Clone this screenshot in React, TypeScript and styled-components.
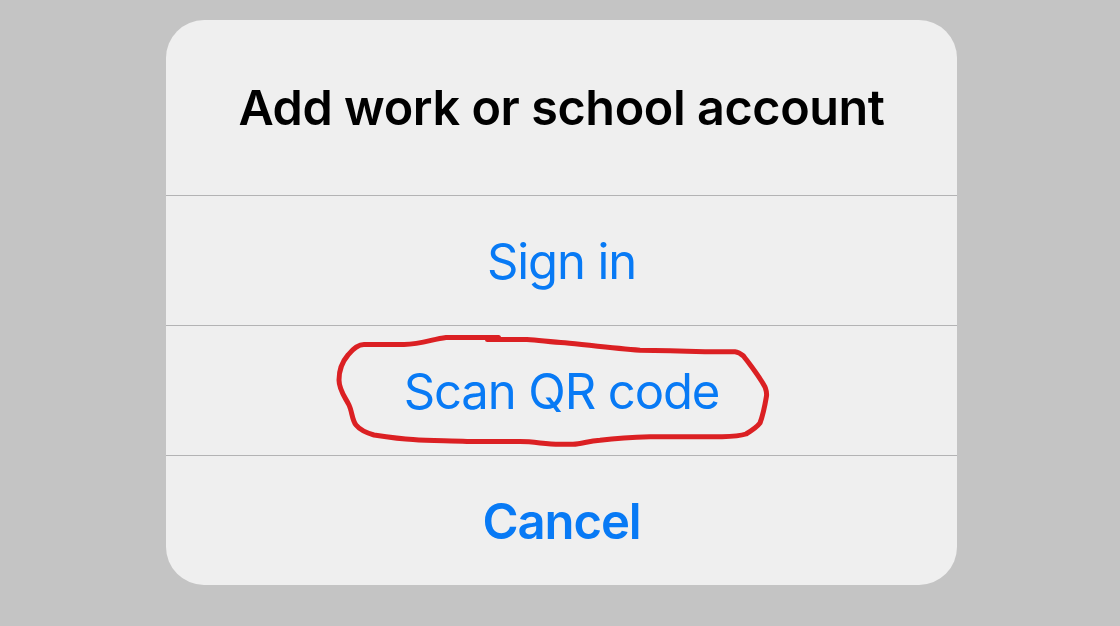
import styled, { createGlobalStyle } from 'styled-components';

const GlobalStyle = createGlobalStyle`
  body {
    margin: 0;
    background: #c4c4c4;
    font-family: Inter, 'Liberation Sans', sans-serif;
  }
`;

const Screen = styled.main`
  min-height: 626px;
  box-sizing: border-box;
  padding: 20px 163px 41px 166px;
`;

const Dialog = styled.section`
  width: 791px;
  height: 565px;
  display: flex;
  flex-direction: column;
  border-radius: 38px;
  background: #efefef;
  overflow: hidden;
`;

const Title = styled.h1`
  margin: 0;
  height: 175px;
  display: flex;
  align-items: center;
  justify-content: center;
  font-size: 48.5px;
  font-weight: 600;
  letter-spacing: -0.4px;
  color: #000;
  white-space: nowrap;
`;

const Action = styled.button<{ $bold?: boolean }>`
  position: relative;
  height: 130px;
  padding: 2px 0 0;
  border: 0;
  border-top: 1px solid #b3b3b4;
  background: transparent;
  font-family: inherit;
  font-size: 49px;
  font-weight: ${({ $bold }) => ($bold ? 600 : 400)};
  letter-spacing: -1.1px;
  color: #087af5;
`;

const Marker = styled.svg`
  position: absolute;
  top: 0;
  left: 164px;
  width: 450px;
  height: 130px;
  fill: none;
  stroke: #db2023;
  stroke-width: 5;
  stroke-linecap: round;
  stroke-linejoin: round;
  pointer-events: none;
`;

export default function App() {
  return (
    <Screen>
      <GlobalStyle />
      <Dialog>
        <Title>Add work or school account</Title>
        <Action>Sign in</Action>
        <Action>
          Scan QR code
          <Marker viewBox="330 326 450 130">
            <path d="M498.500 337.500H446C433 339 422 344 404 344.500H364C357 344.500 352 350 348 355C342 362 339 371 339 380C339 390 345 397 349 405C352 411 352 420 356 425C360 430 367 433 374 435C387 437 400 439 413 439.500C431 441 449 440.500 467 441.500H520C536 441.500 544 444.300 560 444.300H573C582 444 588 441 600 440.300C617 438 634 437 650 436.700H722C731 436.500 740 436 746 434C751 431 757 427 760 423C763 415 765 405 766.500 396C767 392 766 390 765 387C759 376 751 366 743.500 356C740 353 738 352 735 351.700H705C682 351 661 350.500 640 350.300C615 348.500 588 345 565 342.700C550 342 539 340 527 339.500H487.500" />
          </Marker>
        </Action>
        <Action $bold>Cancel</Action>
      </Dialog>
    </Screen>
  );
}
